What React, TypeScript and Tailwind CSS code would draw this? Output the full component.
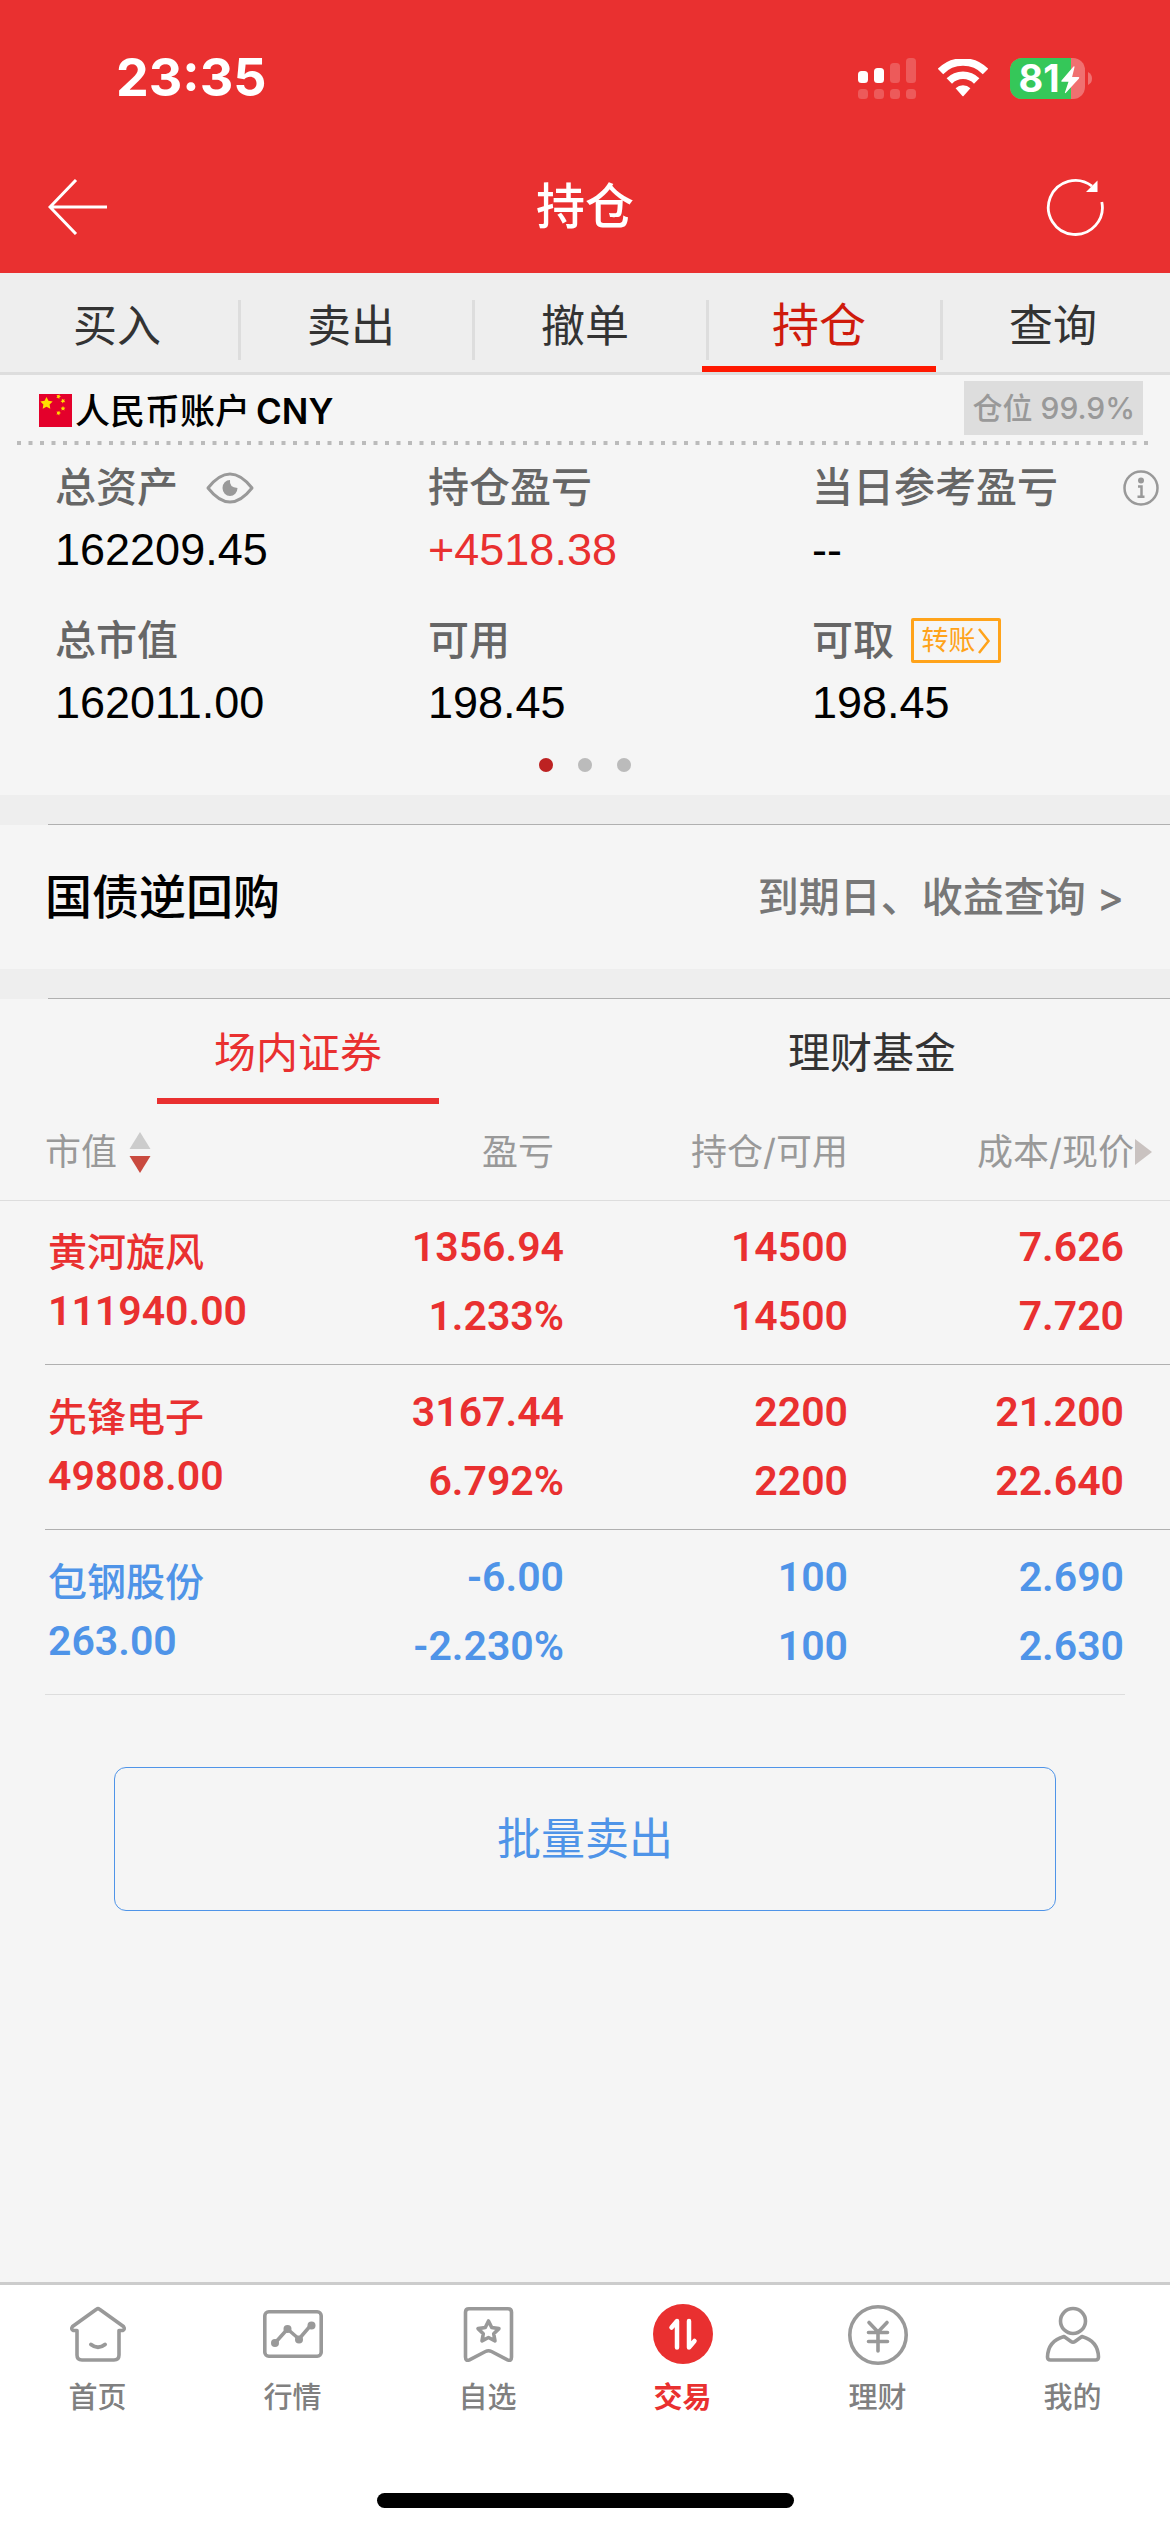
import React, { useState } from 'react';

const TRADE_TABS = ['买入', '卖出', '撤单', '持仓', '查询'];

const HOLDINGS = [
  { name: '黄河旋风', value: '111940.00', profit: '1356.94', rate: '1.233%', held: '14500', usable: '14500', cost: '7.626', price: '7.720', up: true },
  { name: '先锋电子', value: '49808.00', profit: '3167.44', rate: '6.792%', held: '2200', usable: '2200', cost: '21.200', price: '22.640', up: true },
  { name: '包钢股份', value: '263.00', profit: '-6.00', rate: '-2.230%', held: '100', usable: '100', cost: '2.690', price: '2.630', up: false },
];

const star = (cx: number, cy: number, r: number, rot = 0) =>
  Array.from({ length: 10 }, (_, i) => {
    const a = ((i * 36 - 90 + rot) * Math.PI) / 180;
    const d = i % 2 ? r * 0.5 : r;
    return `${(cx + d * Math.cos(a)).toFixed(2)},${(cy + d * Math.sin(a)).toFixed(2)}`;
  }).join(' ');

const SignalIcon = () => (
  <svg width="58" height="41" viewBox="0 0 58 41" fill="#fff" aria-hidden="true">
    <rect x="0" y="13" width="10" height="12" rx="3.5" />
    <rect x="16" y="10" width="10" height="15" rx="3.5" />
    <g opacity=".2">
      <rect x="32" y="5" width="10" height="20" rx="3.5" />
      <rect x="48" y="0" width="10" height="25" rx="3.5" />
      {[0, 16, 32, 48].map((x) => (
        <rect key={x} x={x} y="31" width="10" height="10" rx="3.5" />
      ))}
    </g>
  </svg>
);

const WifiIcon = () => (
  <svg width="50" height="38" viewBox="0 0 50 38" fill="none" stroke="#fff" aria-hidden="true">
    <path d="M2.5 12.5a31.5 31.5 0 0 1 45 0" strokeWidth="7.6" />
    <path d="M11.3 22a19.3 19.3 0 0 1 27.4 0" strokeWidth="7.6" />
    <path d="M17.6 29.3a10.6 10.6 0 0 1 14.8 0L25.6 37q-.6.6-1.2 0z" fill="#fff" stroke="none" />
  </svg>
);

const BatteryIcon = () => (
  <div className="relative flex h-[41px] w-[82px] items-center">
    <svg className="absolute inset-0" width="82" height="41" viewBox="0 0 82 41" aria-hidden="true">
      <defs>
        <clipPath id="cell">
          <rect width="75" height="41" rx="12" />
        </clipPath>
      </defs>
      <g clipPath="url(#cell)">
        <rect width="75" height="41" fill="#f07070" />
        <rect width="61" height="41" fill="#35c759" />
      </g>
      <path d="M78 14q4 2 4 6.5t-4 6.5z" fill="#f07070" />
      <path d="M63.500 8.500L51.500 22.500q-1 1.300.8 1.300h6.200l-3.600 10.600q-.2 1.400 1 .4L69 20.500q1-1.400-.8-1.400h-6.100l2.400-9.800q.2-1.500-1-.8z" fill="#fff" />
    </svg>
    <span className="relative w-[54px] pl-1 text-center text-[38px] leading-[41px] font-bold">81</span>
  </div>
);

const NAV_ITEMS = [
  {
    label: '首页',
    icon: (
      <svg width="60" height="70" viewBox="0 0 60 70" fill="none" stroke="#999" strokeWidth="3.6" strokeLinecap="round" strokeLinejoin="round">
        <path d="M9 27.500H5.500q-3-1.300-1-4L28.500 6.300q1.500-1.200 3 0l24 17.200q2 2.700-1 4H51V52q0 5-5 5H14q-5 0-5-5z" />
        <path d="M23 41.500q7 5.500 14 0" strokeWidth="4" />
      </svg>
    ),
  },
  {
    label: '行情',
    icon: (
      <svg width="60" height="70" viewBox="0 0 60 70" fill="none" stroke="#999" strokeWidth="3.6" strokeLinejoin="round">
        <rect x="1.800" y="8.800" width="56.400" height="44.400" rx="4" />
        <path d="M12 40l12.500-14L36 36l12-14" strokeWidth="3.500" />
        <g fill="#999" stroke="none">
          <circle cx="12" cy="40" r="4" />
          <circle cx="24.500" cy="26" r="4" />
          <circle cx="36" cy="36.500" r="4" />
          <circle cx="48.500" cy="22.500" r="4" />
        </g>
      </svg>
    ),
  },
  {
    label: '自选',
    icon: (
      <svg width="60" height="70" viewBox="0 0 60 70" fill="none" stroke="#999" strokeWidth="3.6" strokeLinejoin="round">
        <path d="M11 5.800h39q3.500 0 3.500 3.500V54q0 4.500-4 2.800L33.500 48.500q-3-1.500-6 0L11.500 56.800q-4 1.700-4-2.800V9.300q0-3.500 3.500-3.500z" />
        <polygon points={star(30.5, 29, 11)} />
      </svg>
    ),
  },
  {
    label: '交易',
    active: true,
    icon: (
      <svg width="60" height="70" viewBox="0 0 60 70" fill="none" stroke="#fff" strokeWidth="4.500" strokeLinecap="round" strokeLinejoin="round">
        <circle cx="30" cy="31" r="30" fill="#e93030" stroke="none" />
        <path d="M24 44.500V18l-5.500 6.500M36 18v26.500l5.500-6.500" />
      </svg>
    ),
  },
  {
    label: '理财',
    icon: (
      <svg width="60" height="70" viewBox="0 0 60 70" fill="none" stroke="#999" strokeWidth="3.6" strokeLinecap="round">
        <circle cx="30" cy="32" r="28.200" />
        <path d="M21 19.500l9 9.500 9-9.500M30 29v19M20.500 29.500h19M20.500 38.500h19" />
      </svg>
    ),
  },
  {
    label: '我的',
    icon: (
      <svg width="60" height="70" viewBox="0 0 60 70" fill="none" stroke="#999" strokeWidth="3.6" strokeLinejoin="round">
        <circle cx="30" cy="18" r="12.500" />
        <path d="M21 33.500Q5 38 4.500 54q0 3 3 3h45q3 0 3-3Q55 38 39 33.500L32 38.500q-2 1.500-4 0z" />
      </svg>
    ),
  },
];

const Figure: React.FC<{ label: string; value: string; red?: boolean; extra?: React.ReactNode }> = ({ label, value, red, extra }) => (
  <div>
    <dt className="flex h-[61px] items-center text-[41px] leading-[61px] font-medium text-[#666]">
      {label}
      {extra}
    </dt>
    <dd className={`h-16 font-['Liberation_Sans',sans-serif] text-[45px] leading-[64px] ${red ? 'text-[#e93030]' : 'text-black'}`}>{value}</dd>
  </div>
);

const Band = () => (
  <div className="h-[30px] bg-[#eee] pl-12">
    <div className="h-full border-b border-[#b0b0b0]"></div>
  </div>
);

export default function App() {
  const [tab, setTab] = useState('持仓');
  const [market, setMarket] = useState('场内证券');

  return (
    <div className="flex min-h-screen flex-col bg-[#f5f5f5] font-['Inter','Noto_Sans_CJK_SC',sans-serif]">
      <header className="h-[273px] bg-[#e93030] text-white">
        <div className="flex h-[156px] items-center justify-between pr-[78px] pl-[116px]">
          <time className="text-[52px] leading-[60px] font-bold">23:35</time>
          <div className="flex items-center gap-[22px]">
            <SignalIcon />
            <WifiIcon />
            <BatteryIcon />
          </div>
        </div>
        <div className="flex h-[102px] items-center justify-between px-12">
          <button aria-label="返回" className="w-[76px]">
            <svg width="60" height="56" viewBox="0 0 60 56" fill="none" stroke="#fff" strokeWidth="3">
              <path d="M28 1L2 28l26 27M2 28h57" />
            </svg>
          </button>
          <h1 className="text-[49px] leading-[60px] font-medium">持仓</h1>
          <button aria-label="刷新" className="w-[76px]">
            <svg width="60" height="60" viewBox="0 0 60 60" fill="none" stroke="#fff" strokeWidth="2.800">
              <path d="M55.800 25A27 27 0 1 1 46 9.200" />
              <path d="M51.500 3.500v11.500H40z" fill="#fff" stroke="none" />
            </svg>
          </button>
        </div>
      </header>

      <nav className="flex border-b-3 border-[#ddd] bg-[#eee]">
        {TRADE_TABS.map((t, i) => (
          <button
            key={t}
            onClick={() => setTab(t)}
            className={`relative h-[99px] flex-1 border-b-6 pt-3 ${
              tab === t ? 'border-[#ff1800] text-[47px] text-[#cf1b0c]' : 'border-transparent text-[44px] text-[#333]'
            }`}
          >
            {i > 0 && <span className="absolute top-[27px] left-1 h-[60px] w-[3px] bg-[#ddd]"></span>}
            {t}
          </button>
        ))}
      </nav>

      <section>
        <div className="flex h-[66px] items-center pr-[27px] pl-[39px]">
          <svg className="mt-1 mr-[3px]" width="33" height="33" viewBox="0 0 33 33" fill="#ffde00" aria-hidden="true">
            <rect width="33" height="33" fill="#e4002b" />
            <polygon points={star(7.5, 9.5, 6.5)} />
            <polygon points={star(19.5, 2.5, 2.5, 20)} />
            <polygon points={star(24, 7, 2.5, 45)} />
            <polygon points={star(24, 14.5, 2.5)} />
            <polygon points={star(19.5, 19, 2.5, 20)} />
          </svg>
          <h2 className="flex gap-[6px] pt-[6px] text-[35px] leading-[52px] font-medium text-black">
            人民币账户 <span className="font-semibold">CNY</span>
          </h2>
          <span className="ml-auto bg-[#ddd] px-2 text-[30px] leading-[54px] font-medium text-[#999]">仓位 99.9%</span>
        </div>
        <svg className="block h-1 w-full px-[17px]" aria-hidden="true">
          <line x1="0" y1="2" x2="100%" y2="2" stroke="#bbb" strokeWidth="4" strokeDasharray="4 7.500" />
        </svg>

        <dl className="grid grid-cols-[373px_384px_1fr] gap-y-7 pt-3 pl-[55px]">
          <Figure
            label="总资产"
            value="162209.45"
            extra={
              <button aria-label="隐藏金额" className="ml-7">
                <svg width="48" height="36" viewBox="0 0 48 36" fill="none" stroke="#999" strokeWidth="3">
                  <path d="M2 18Q24-10 46 18 24 46 2 18z" strokeLinejoin="round" />
                  <path d="M24 10q-1 7.500 7.500 8a7.500 8 0 1 1-7.500-8z" fill="#999" stroke="none" />
                </svg>
              </button>
            }
          />
          <Figure label="持仓盈亏" value="+4518.38" red />
          <Figure
            label="当日参考盈亏"
            value="--"
            extra={
              <button aria-label="说明" className="mr-[11px] ml-auto">
                <svg width="36" height="36" viewBox="0 0 36 36" fill="none" stroke="#999" strokeWidth="2.500">
                  <circle cx="18" cy="18" r="16.500" />
                  <path d="M15 16.500h3.500V26.500M14.500 26.800h7" />
                  <circle cx="18" cy="10.500" r="3" fill="#999" stroke="none" />
                </svg>
              </button>
            }
          />
          <Figure label="总市值" value="162011.00" />
          <Figure label="可用" value="198.45" />
          <Figure
            label="可取"
            value="198.45"
            extra={
              <button className="ml-[17px] flex h-[45px] w-[90px] items-center justify-center rounded-xs border-3 border-[#ffa31a] text-[27px] font-normal text-[#ffa31a]">
                转账
                <svg width="15" height="26" viewBox="0 0 15 26" fill="none" stroke="#ffa31a" strokeWidth="2.500">
                  <path d="M3 1l9.500 12L3 25" />
                </svg>
              </button>
            }
          />
        </dl>
        <div className="flex h-[60px] items-center justify-center gap-[25px]">
          <span className="size-[14px] rounded-full bg-[#bd2222]"></span>
          <span className="size-[14px] rounded-full bg-[#bbb]"></span>
          <span className="size-[14px] rounded-full bg-[#bbb]"></span>
        </div>
      </section>

      <Band />
      <section className="flex h-36 items-center justify-between pr-[46px] pl-[45px]">
        <h2 className="text-[47px] leading-[70px] font-medium text-black">国债逆回购</h2>
        <a href="#repo" className="text-[41px] leading-[62px] font-medium text-[#777]">到期日、收益查询 &gt;</a>
      </section>
      <Band />

      <div className="flex px-[11px]">
        {['场内证券', '理财基金'].map((m) => (
          <button key={m} onClick={() => setMarket(m)} className="flex h-[105px] flex-1 flex-col items-center justify-between text-[42px]">
            <span className={`pt-[22px] leading-[63px] ${market === m ? 'text-[#e93030]' : 'text-[#333]'}`}>{m}</span>
            {market === m && <span className="h-[6px] w-[282px] bg-[#e93030]"></span>}
          </button>
        ))}
      </div>

      <table className="w-full table-fixed">
        <colgroup>
          <col />
          <col className="w-[245px]" />
          <col className="w-[284px]" />
          <col className="w-[322px]" />
        </colgroup>
        <thead>
          <tr className="h-24 border-b border-[#ddd] text-[36px] leading-[54px] text-[#999]">
            <th className="pl-[45px] text-left font-normal">
              <button className="flex items-center gap-3">
                市值
                <svg width="22" height="42" viewBox="0 0 22 42" aria-hidden="true">
                  <path d="M11 1l10.500 17H.5z" fill="#ccc" />
                  <path d="M11 42l10.500-17H.5z" fill="#c94a3f" />
                </svg>
              </button>
            </th>
            <th className="pr-[10px] text-right font-normal">盈亏</th>
            <th className="text-right font-normal">持仓/可用</th>
            <th className="pr-[18px] text-right font-normal">
              <span className="flex items-center justify-end">
                成本/现价
                <svg width="18" height="26" viewBox="0 0 18 26" aria-hidden="true">
                  <path d="M1 0l17 13L1 26z" fill="#c9c2c0" />
                </svg>
              </span>
            </th>
          </tr>
        </thead>
        {HOLDINGS.map((h, i) => (
          <tbody key={h.name} className="font-['Roboto','Noto_Sans_CJK_SC',sans-serif]">
            <tr className={`h-[164px] text-[41px] leading-[69px] font-semibold ${h.up ? 'text-[#e93030]' : 'text-[#4f94e8]'}`}>
              <td className="pl-12">
                <div className="text-[39px] leading-[58px] font-medium">{h.name}</div>
                <div className="leading-[58px]">{h.value}</div>
              </td>
              <td className="text-right">
                <div>{h.profit}</div>
                <div>{h.rate}</div>
              </td>
              <td className="text-right">
                <div>{h.held}</div>
                <div>{h.usable}</div>
              </td>
              <td className="pr-[46px] text-right">
                <div>{h.cost}</div>
                <div>{h.price}</div>
              </td>
            </tr>
            <tr>
              <td colSpan={4} className={i === HOLDINGS.length - 1 ? 'px-[45px]' : 'pl-[45px]'}>
                <div className={`h-px ${i === HOLDINGS.length - 1 ? 'bg-[#ddd]' : 'bg-[#b0b0b0]'}`}></div>
              </td>
            </tr>
          </tbody>
        ))}
      </table>

      <button className="mx-[114px] mt-[72px] h-36 rounded-xl border border-[#4f94e8] text-[44px] text-[#4f94e8]">批量卖出</button>

      <footer className="mt-auto border-t-3 border-[#ccc] bg-white">
        <nav className="flex pt-[18px]">
          {NAV_ITEMS.map((n) => (
            <a
              key={n.label}
              href="#nav"
              className={`flex flex-1 flex-col items-center text-[29px] leading-[42px] ${n.active ? 'font-bold text-[#e93030]' : 'font-medium text-[#808080]'}`}
            >
              {n.icon}
              <span className="mt-1">{n.label}</span>
            </a>
          ))}
        </nav>
        <div className="mx-auto mt-[74px] mb-6 h-[15px] w-[417px] rounded-full bg-black"></div>
      </footer>
    </div>
  );
}
